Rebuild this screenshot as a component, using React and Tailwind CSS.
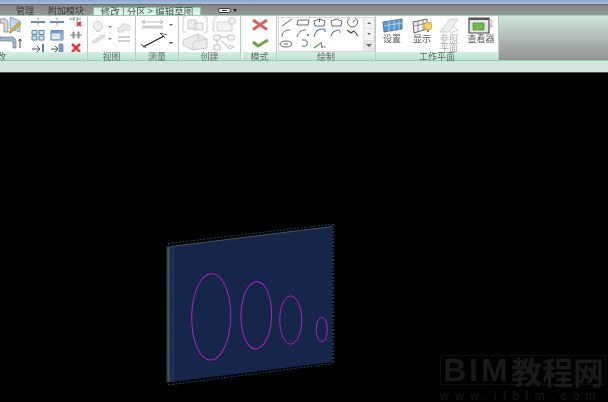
const cjk = { fontFamily: '"Noto Sans CJK SC", "Liberation Sans", sans-serif' };

// small line icon, 14x12 box by default
function Ico({ w = 14, h = 12, children }) {
  return (
    <svg width={w} height={h} viewBox={`0 0 ${w} ${h}`} className="shrink-0" fill="none">
      {children}
    </svg>
  );
}

function Panel({ label, width, labelClass = "justify-center", children }) {
  return (
    <div className="flex flex-col shrink-0 border-r border-[#b9cfc3]" style={{ width }}>
      <div className="h-[36px] bg-white overflow-hidden relative">{children}</div>
      <div className={`h-[8px] bg-gradient-to-b from-[#d4f0e1] to-[#bfe2d0] flex items-center text-[9px] leading-none text-[#5f6f68] ${labelClass}`}>
        {label}
      </div>
    </div>
  );
}

function ModifyPanel() {
  return (
    <div className="flex h-full">
      <svg width="24" height="36" viewBox="0 0 24 36" className="shrink-0" fill="none">
        <path d="M0 3h6l2 3v10H4V7H0z" fill="#d5d9de" stroke="#777" strokeWidth=".7" />
        <path d="M10 1l10 4v11l-10-3z" fill="#bcd7ee" stroke="#6f93b8" strokeWidth=".7" />
        <path d="M10 15l9-9 2 2-9 8-3 1z" fill="#e8b23c" stroke="#8a6a20" strokeWidth=".6" />
        <path d="M0 21h13l3 3v8h-3v-6l-2-1H0z" fill="#9fb9d3" stroke="#5a6c80" strokeWidth=".6" />
        <path d="M20 32V23M18.500 25l1.500-2 1.500 2" stroke="#333" strokeWidth=".9" />
      </svg>
      <div className="grid grid-cols-3 gap-x-[5px] gap-y-[1px] ml-[7px] w-[52px] content-start">
        <Ico>
          <path d="M0 6h14" stroke="#5b93c9" strokeWidth="2" />
          <path d="M7 2v8" stroke="#d98a8a" strokeWidth="1.500" strokeDasharray="1.500 1" />
        </Ico>
        <Ico>
          <path d="M0 6h14" stroke="#5b93c9" strokeWidth="2" />
          <path d="M7 2v8" stroke="#d98a8a" strokeWidth="1.500" strokeDasharray="1.500 1" />
        </Ico>
        <Ico>
          <path d="M0 3h5M8 3h4M5 1v4M8 1v4" stroke="#666" strokeWidth=".7" />
          <path d="M8 6l4 4M12 6l-4 4" stroke="#d63a3a" strokeWidth="1.800" />
        </Ico>
        <Ico>
          <path d="M1 1.500h5v4H1zM8 1.500h5v4H8zM1 7h5v4H1zM8 7h5v4H8z" fill="#d7e7f5" stroke="#4f82b5" strokeWidth="1" />
        </Ico>
        <Ico>
          <path d="M1 1.500h12V11H1z" fill="#d7e7f5" stroke="#5a7fa5" strokeWidth="1" />
          <path d="M1 1.500h12v3H1z" fill="#6fa0cf" />
          <path d="M10 4h3v7h-3z" fill="#8fb5da" />
        </Ico>
        <Ico>
          <path d="M1 6h3M10 6h3M4 3h1v6H4zM9 3h1v6H9zM5 6h4" stroke="#666" strokeWidth=".8" />
        </Ico>
        <Ico>
          <path d="M1 7h8M6 4l3 3-3 3" stroke="#555" strokeWidth="1" />
          <path d="M11 2h2v9h-2z" fill="#4f82b5" />
        </Ico>
        <Ico>
          <path d="M1 7h7M5 4l3 3-3 3" stroke="#555" strokeWidth="1" />
          <path d="M9 2h4v9H9z" fill="#6fa0cf" stroke="#4f6f90" strokeWidth=".6" />
        </Ico>
        <Ico>
          <path d="M3 2l8 8M11 2l-8 8" stroke="#e23b3b" strokeWidth="2.600" />
        </Ico>
      </div>
    </div>
  );
}

function ViewPanel() {
  return (
    <svg width="48" height="36" viewBox="0 0 48 36" fill="none">
      <circle cx="10" cy="10" r="4.500" fill="#f0f0f0" stroke="#cfcfcf" />
      <path d="M8 14h4v2H8z" fill="#d8d8d8" />
      <path d="M20 10h4l-2 2z" fill="#888" />
      <path d="M30 12l4-2v-2h5l3 2v4h-7v2h-5z" fill="#ececec" stroke="#d2d2d2" />
      <path d="M4 26l10-7 3 1-10 7z" fill="#e2e2e2" stroke="#cfcfcf" />
      <path d="M20 22h4l-2 2z" fill="#888" />
      <path d="M30 21h12M30 25h12" stroke="#cfcfcf" strokeWidth="2" />
    </svg>
  );
}

function MeasurePanel() {
  return (
    <svg width="42" height="36" viewBox="0 0 42 36" fill="none">
      <path d="M6 6h21M6 6l3-2M6 6l3 2M27 6l-3-2M27 6l-3 2" stroke="#aaa" strokeWidth=".8" />
      <path d="M6 11h21" stroke="#cfcfcf" strokeWidth="3" />
      <path d="M33 8h4l-2 2z" fill="#666" />
      <path d="M7 31L28 20" stroke="#222" strokeWidth="1.400" />
      <path d="M5 28l5 4M24 17l5 5" stroke="#444" strokeWidth="1" />
      <path d="M25 17l6 2" stroke="#444" strokeWidth=".8" />
      <path d="M33 26h4l-2 2z" fill="#444" />
    </svg>
  );
}

function CreatePanel() {
  return (
    <svg width="62" height="36" viewBox="0 0 62 36" fill="none">
      <path d="M7 1H4v15h3M25 1h3v15h-3" stroke="#d0d0d0" />
      <path d="M9 4h8v9H9zM15 7h9v7h-9z" fill="#efefef" stroke="#cdcdcd" />
      <path d="M38 1h-2l-2 5v8l2 2M38 6h12l3 3v6H38z" stroke="#d2d2d2" fill="#f4f4f4" />
      <circle cx="53" cy="5" r="3.500" stroke="#cfcfcf" fill="#eee" />
      <path d="M4 24l15-6 9 5v9l-14 2-10-5z" fill="#ebebeb" stroke="#cacaca" />
      <path d="M14 26v8M19 19v5M14 26l14-3" stroke="#d0d0d0" />
      <path d="M35 19h6v5h-6zM49 19h6v5h-6zM35 29h6v5h-6z" stroke="#c6c6c6" fill="#f6f6f6" />
      <path d="M41 21h8M38 24v5M42 25l6 5" stroke="#bcbcbc" />
      <path d="M48 31l3-2 4 2-4 2z" stroke="#c6c6c6" fill="#f6f6f6" />
    </svg>
  );
}

function ModePanel() {
  return (
    <svg width="34" height="36" viewBox="0 0 34 36" fill="none">
      <path d="M10 4l14 9.500M24 4L10 13.500" stroke="#e0605a" strokeWidth="3" />
      <path d="M10 26l5 4 10-6" stroke="#6ea33f" strokeWidth="3" />
    </svg>
  );
}

function DrawPanel() {
  return (
    <div className="flex h-full pt-[1px] pl-[1px]">
      <div className="flex border border-[#d6d6d6] w-[97px] h-[35px]">
        <svg width="84" height="33" viewBox="0 0 84 33" fill="none" className="shrink-0">
          <g stroke="#444" strokeWidth=".8">
            <path d="M3 8l10-7" />
            <path d="M19 2h11l-1 5H18z" />
            <path d="M35 3l5.500-2 5.500 2-1 5h-9z" />
            <path d="M40.500 1v3" />
            <path d="M52 3l5.500-2 5.500 2-1 5h-9z" />
            <circle cx="73.500" cy="4" r="5" />
            <path d="M73.500 4l3-2" />
            <path d="M3 19c0-5 3-7 8-7" />
            <path d="M18 19c1-5 4-7 9-7" />
            <circle cx="29" cy="17" r=".6" fill="#444" />
            <path d="M68 12l4 3 3-2 4 5" strokeWidth="1.100" />
            <ellipse cx="7" cy="26" rx="6" ry="3" />
            <path d="M5 26h4" />
            <path d="M23 22h3c3 0 3 6 0 6h-3" />
            <path d="M42 24l1 6 1.500-2 2 2" strokeWidth=".7" />
          </g>
          <circle cx="61" cy="14" r=".8" fill="#d2483f" />
          <path d="M35 19c1-5 4-8 8-8s3 1 3 3" stroke="#3f7fc4" strokeWidth="1.100" />
          <path d="M52 18c1-4 4-6 9-6" stroke="#3f7fc4" strokeWidth="1.100" />
          <path d="M35 30l7-5" stroke="#4fa23c" strokeWidth="1.300" />
        </svg>
        <div className="flex-1 flex flex-col border-l border-[#e2e2e2] bg-[#f4f4f4]">
          <div className="flex-1 flex items-center justify-center">
            <div className="w-0 h-0 border-x-[2px] border-x-transparent border-b-[2px] border-b-[#666]" />
          </div>
          <div className="flex-1 flex items-center justify-center border-t border-[#e2e2e2]">
            <div className="w-0 h-0 border-x-[2px] border-x-transparent border-t-[2px] border-t-[#666]" />
          </div>
          <div className="flex-1 flex items-center justify-center border-t border-[#e2e2e2] bg-[#e6e6e6]">
            <div className="w-0 h-0 border-x-[3px] border-x-transparent border-t-[3px] border-t-[#666]" />
          </div>
        </div>
      </div>
    </div>
  );
}

function PlaneTool({ label, dim, children, width }) {
  return (
    <div className="flex flex-col items-center shrink-0" style={{ width }}>
      <div className="h-[17px] flex items-center justify-center">{children}</div>
      <div className={`text-[9px] leading-[9px] text-center whitespace-nowrap ${dim ? "text-[#aaa]" : "text-[#5a5a5a]"}`}>{label}</div>
    </div>
  );
}

function PlanePanel() {
  return (
    <div className="flex pt-[1px]">
      <PlaneTool label="设置" width={32}>
        <svg width="21" height="15" viewBox="0 0 21 15" fill="none">
          <path d="M1 4l19-3v10L2 14z" fill="#5f97cf" stroke="#24558c" strokeWidth=".7" />
          <path d="M7 3v11M12 2v11M17 2v10M2 8l18-3" stroke="#cfe3f5" strokeWidth=".7" />
        </svg>
      </PlaneTool>
      <PlaneTool label="显示" width={28}>
        <svg width="21" height="16" viewBox="0 0 21 16" fill="none">
          <path d="M1 4l14-3v10L2 15z" fill="#eef2f5" stroke="#444" strokeWidth=".8" />
          <path d="M6 3v11M11 2v10M2 8l13-3" stroke="#555" strokeWidth=".6" />
          <circle cx="16" cy="8" r="4" fill="#f4d25a" stroke="#b3902a" strokeWidth=".6" />
          <path d="M15 12h2v2h-2z" fill="#888" />
        </svg>
      </PlaneTool>
      <PlaneTool label={<>参照<br />平面</>} width={26} dim>
        <svg width="22" height="16" viewBox="0 0 22 16" fill="none">
          <path d="M2 14L12 1h8L11 14z" fill="#eeeeee" stroke="#d0d0d0" />
          <path d="M15 8l5 4-8 3" stroke="#cfcfcf" />
        </svg>
      </PlaneTool>
      <PlaneTool label="查看器" width={38}>
        <svg width="26" height="17" viewBox="0 0 26 17" fill="none">
          <path d="M1 1h20v15H1z" fill="#e4e4e4" stroke="#4a4a4a" strokeWidth="1.200" />
          <path d="M1 1h20v2H1z" fill="#555" />
          <path d="M5 6h11v7H5z" fill="#72b84f" stroke="#3f7a2a" strokeWidth=".6" />
          <path d="M21 3h3v3h-3zM22 8h2v2h-2z" stroke="#999" strokeWidth=".7" />
        </svg>
      </PlaneTool>
    </div>
  );
}

function Watermark() {
  return (
    <div className="absolute left-[440px] top-[282px] w-[166px] text-[#191919]" style={cjk}>
      <div className="flex items-center h-[30px] border border-[#0e0e0e] font-bold leading-none">
        <span className="w-[70px] pl-[2px] text-[32px] tracking-[3px]" style={{ fontFamily: '"Liberation Sans", sans-serif' }}>BIM</span>
        <span className="text-[31px]">教程网</span>
      </div>
      <div className="text-[12px] leading-none mt-[5px] tracking-[6.300px] whitespace-nowrap w-[166px] overflow-hidden" style={{ fontFamily: '"Liberation Sans", sans-serif' }}>
        www.ifbim.com
      </div>
    </div>
  );
}

export default function App() {
  return (
    <div className="w-[608px] h-[402px] bg-black overflow-hidden flex flex-col" style={cjk}>
      <div className="h-[5px] shrink-0 bg-gradient-to-b from-[#8aa8cc] to-[#a9c1dc] border-b border-[#6a6a6a]" />

      {/* tab row */}
      <div className="h-[10px] shrink-0 bg-gradient-to-b from-[#858585] to-[#9a9a9a] flex items-end text-[9px] leading-none text-[#3a3a3a] blur-[0.5px]">
        <span className="ml-[16px]">管理</span>
        <span className="ml-[14px]">附加模块</span>
        <div className="ml-[9px] w-[108px] h-[8px] bg-gradient-to-b from-[#cdeedd] to-[#e4f5ec] border-x border-t border-[#7fd0ab] flex items-center justify-center text-[#46524d] whitespace-nowrap text-[9.500px]">
          修改 | 分区 &gt; 编辑草图
        </div>
        <div className="ml-[17px] mb-[2px] w-[13px] h-[5px] rounded-[2px] bg-[#e4e4e4] border border-[#444] flex items-center justify-center">
          <div className="w-[5px] h-[1px] bg-[#444]" />
        </div>
        <div className="ml-[2px] mb-[3px] w-0 h-0 border-x-[2px] border-x-transparent border-t-[3px] border-t-[#222]" />
      </div>

      {/* ribbon */}
      <div className="h-[46px] shrink-0 flex border-y border-[#8ed4b3] bg-gradient-to-b from-[#cfe6d9] to-[#939393] blur-[0.5px]">
        <Panel label="改" width={88} labelClass="justify-start -ml-[3px]"><ModifyPanel /></Panel>
        <Panel label="视图" width={48}><ViewPanel /></Panel>
        <Panel label="测量" width={43}><MeasurePanel /></Panel>
        <Panel label="创建" width={62}><CreatePanel /></Panel>
        <div className="w-[2px] shrink-0 bg-[#eef5f1]" />
        <Panel label="模式" width={34}><ModePanel /></Panel>
        <Panel label="绘制" width={99}><DrawPanel /></Panel>
        <Panel label="工作平面" width={123}><PlanePanel /></Panel>
      </div>
      <div className="h-[11px] shrink-0 bg-[#d5e7dd]" />
      <div className="h-[1px] shrink-0 bg-[#555]" />

      {/* drawing canvas */}
      <div className="relative flex-1 bg-black">
        <svg width="608" height="329" viewBox="0 73 608 329" fill="none" className="block">
          <path d="M166.500 246.500H170.500V382H166.500z" fill="#3c4343" />
          <path d="M170.500 246.500L332 226.500V362L170.500 382z" fill="#16264a" />
          <path d="M170.500 246.500V382h4V246z" fill="#15305f" />
          <path d="M170.500 246.500L332 226.500" stroke="#5c6470" strokeWidth=".8" />
          <path d="M168.500 243.500L333 224M168.500 385L333 363.500" stroke="#0f5a80" strokeWidth=".8" strokeDasharray="2 1.500" />
          <path d="M333 224V364" stroke="#1f86c4" strokeWidth=".9" strokeDasharray="2 1.500" />
          <path d="M168.500 243.500V385" stroke="#4d6466" strokeWidth=".6" strokeDasharray="2 1.500" />
          <g stroke="#b41ec4" strokeWidth="1">
            <ellipse cx="211.200" cy="316.700" rx="19.500" ry="43.300" transform="rotate(1 211.200 316.700)" />
            <ellipse cx="256.300" cy="315.300" rx="15.300" ry="33.700" transform="rotate(1 256.300 315.300)" />
            <ellipse cx="290.700" cy="320" rx="11" ry="24" />
            <ellipse cx="321.800" cy="329.500" rx="5.500" ry="12.200" />
          </g>
        </svg>
        <Watermark />
      </div>
    </div>
  );
}
